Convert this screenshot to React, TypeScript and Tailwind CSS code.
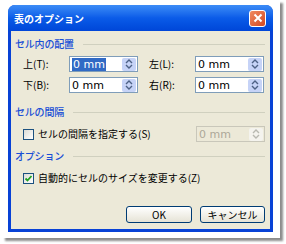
import type { ReactNode } from "react";

const jp = "font-['Noto_Sans_CJK_JP','Noto_Sans',sans-serif]";

function Spin({ disabled }: { disabled?: boolean }) {
  const c = disabled ? "#b8b8b0" : "#4d6185";
  return (
    <div
      className={`flex h-[13px] w-[14px] flex-col items-center justify-center rounded-[2px] ${
        disabled ? "bg-[#f4f3ee]" : "bg-[#c6d3f7]"
      }`}
    >
      <svg width="8" height="12" viewBox="0 0 8 12">
        <path d="M1 5 L4 2 L7 5" fill="none" stroke={c} strokeWidth="1.4" />
        <path d="M1 7 L4 10 L7 7" fill="none" stroke={c} strokeWidth="1.4" />
      </svg>
    </div>
  );
}

function NumInput({ selected, disabled }: { selected?: boolean; disabled?: boolean }) {
  return (
    <div
      className={`flex h-[16px] w-[69px] shrink-0 items-center justify-between border pl-[2px] pr-[1px] ${
        disabled ? "border-[#c9c7ba] bg-[#ece9d8]" : "border-[#7f9db9] bg-white"
      }`}
    >
      <span
        className={`font-['DejaVu_Sans',sans-serif] text-[11px] leading-[13px] ${
          disabled ? "text-[#aca899]" : "text-black"
        } ${selected ? "bg-[#316ac5] px-[1px] text-white" : ""}`}
      >
        0 mm
      </span>
      <Spin disabled={disabled} />
    </div>
  );
}

function Section({ title, children }: { title: string; children?: ReactNode }) {
  return (
    <div className="flex items-center gap-[9px]">
      <span className={`${jp} text-[10px] font-medium leading-[14px] tracking-[-0.2px] text-[#1a4fd6]`}>{title}</span>
      <div className="h-px flex-1 bg-[#d0d0bf]" />
      {children}
    </div>
  );
}

function Check({ checked }: { checked?: boolean }) {
  return (
    <div className="flex h-[11px] w-[11px] items-center justify-center border border-[#1c5180] bg-gradient-to-br from-[#dcdcd6] to-white">
      {checked && (
        <svg width="9" height="9" viewBox="0 0 9 9">
          <path d="M1.5 4.5 L3.5 6.5 L7.5 2" fill="none" stroke="#21a121" strokeWidth="1.8" />
        </svg>
      )}
    </div>
  );
}

function Field({ label, selected }: { label: string; selected?: boolean }) {
  return (
    <div className="flex items-center">
      <span className={`${jp} w-[46px] text-[10px] leading-[14px] text-black`}>{label}</span>
      <NumInput selected={selected} />
    </div>
  );
}

export default function App() {
  return (
    <div className="h-[244px] w-[286px] bg-white">
      <div className="ml-[2px] h-[238px] w-[278px] bg-white pl-[6px] pt-[5px] shadow-[3px_3px_2px_rgba(0,0,0,0.45)]">
        <div className="flex h-[227px] w-[265px] flex-col overflow-hidden rounded-t-[7px] bg-[#0842d6]">
          <div className="flex h-[26px] shrink-0 items-center justify-between bg-gradient-to-b from-[#3c8cf6] via-[#0b5be8] to-[#0046d8] pl-[6px] pr-[7px]">
            <span className={`${jp} text-[10px] font-bold leading-[15px] text-white`}>表のオプション</span>
            <div className="flex h-[17px] w-[17px] items-center justify-center rounded-[3px] border border-white bg-gradient-to-br from-[#f08a60] to-[#d3461d]">
              <svg width="10" height="10" viewBox="0 0 10 10">
                <path d="M1.5 1.5 L8.5 8.5 M8.5 1.5 L1.5 8.5" stroke="white" strokeWidth="2" />
              </svg>
            </div>
          </div>
          <div className="mx-[3px] mb-[3px] flex flex-1 flex-col bg-[#ece9d8] pb-[6px] pl-[4px] pr-[5px] pt-[6px]">
            <Section title="セル内の配置" />
            <div className="mt-[5px] grid grid-cols-[auto_auto] justify-start gap-x-[11px] gap-y-[5px] pl-[8px]">
              <Field label="上(T):" selected />
              <Field label="左(L):" />
              <Field label="下(B):" />
              <Field label="右(R):" />
            </div>
            <div className="mt-[12px]">
              <Section title="セルの間隔" />
            </div>
            <div className="mt-[7px] flex items-center justify-between pl-[8px]">
              <div className="flex items-center gap-[4px]">
                <Check />
                <span className={`${jp} text-[10px] leading-[14px] text-black`}>セルの間隔を指定する(S)</span>
              </div>
              <NumInput disabled />
            </div>
            <div className="mt-[7px]">
              <Section title="オプション" />
            </div>
            <div className="mt-[8px] flex items-center gap-[4px] pl-[8px]">
              <Check checked />
              <span className={`${jp} text-[10px] leading-[14px] text-black`}>自動的にセルのサイズを変更する(Z)</span>
            </div>
            <div className="mt-auto flex justify-end gap-[8px]">
              <button className={`${jp} flex h-[17px] w-[66px] items-center justify-center rounded-[3px] border border-[#003c74] bg-gradient-to-b from-white to-[#e6e3d6] text-[10px] leading-[13px] text-black`}>
                OK
              </button>
              <button className={`${jp} flex h-[17px] w-[65px] items-center justify-center rounded-[3px] border border-[#003c74] bg-gradient-to-b from-white to-[#e6e3d6] text-[10px] leading-[13px] text-black`}>
                キャンセル
              </button>
            </div>
          </div>
        </div>
      </div>
    </div>
  );
}
